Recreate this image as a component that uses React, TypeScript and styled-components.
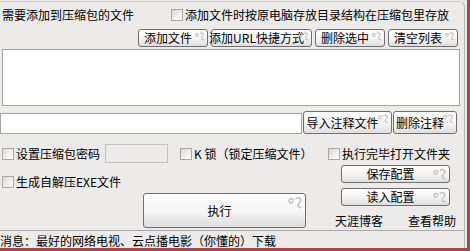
import React from "react";
import styled, { createGlobalStyle } from "styled-components";

const GlobalStyle = createGlobalStyle`
  html, body {
    margin: 0;
    padding: 0;
    background: #ecebea;
  }
  * {
    box-sizing: border-box;
  }
`;

const Window = styled.div`
  width: 470px;
  height: 251px;
  display: flex;
  flex-direction: column;
  background: #ecebea;
  border-right: 3px solid #b0413e;
  border-bottom: 3px solid #b0413e;
  font-family: "SimSun", "Noto Sans CJK SC", sans-serif;
  font-size: 12px;
  line-height: 14px;
  color: #000;
  overflow: hidden;
`;

const Panel = styled.div`
  width: 465px;
  margin-top: 1px;
  height: 229px;
  border-top: 1px solid #cfcfcf;
  border-right: 1px solid #b8b8b8;
  border-top-right-radius: 6px;
  display: flex;
  flex-direction: column;
`;

const TitleRow = styled.div`
  height: 26px;
  display: flex;
  align-items: center;
  padding-left: 2px;
`;

const Title = styled.span`
  white-space: nowrap;
`;

const ButtonRow = styled.div`
  margin-top: 1px;
  height: 18px;
  display: flex;
  gap: 3px;
  padding-left: 138px;
`;

const ListBox = styled.div`
  margin-top: 2px;
  margin-left: 2px;
  width: 458px;
  height: 57px;
  background: #fff;
  border: 1px solid #a5a5a5;
`;

const AnnotRow = styled.div`
  margin-top: 4px;
  height: 24px;
  display: flex;
  align-items: flex-end;
  gap: 1px;
`;

const TextInput = styled.div<{ $w: number; $h: number; $disabled?: boolean }>`
  width: ${(p) => p.$w}px;
  height: ${(p) => p.$h}px;
  flex: none;
  background: ${(p) => (p.$disabled ? "#ecebea" : "#fff")};
  border: 1px solid ${(p) => (p.$disabled ? "#c4c4c4" : "#a5a5a5")};
`;

const Btn = styled.div<{ $w: number; $h: number }>`
  position: relative;
  flex: none;
  width: ${(p) => p.$w}px;
  height: ${(p) => p.$h}px;
  display: flex;
  align-items: center;
  justify-content: center;
  padding-right: 10px;
  border: 1px solid #6f6f6f;
  border-radius: 3px;
  background: linear-gradient(#ffffff 0%, #f4f4f4 55%, #dedede 100%);
  white-space: nowrap;
`;

const SwirlWrap = styled.span<{ $s: number }>`
  position: absolute;
  right: 2px;
  top: 1px;
  width: ${(p) => p.$s}px;
  height: ${(p) => p.$s}px;
  display: flex;
`;

const Options = styled.div`
  flex: 1;
  display: flex;
`;

const LeftCol = styled.div`
  width: 328px;
  display: flex;
  flex-direction: column;
`;

const RightCol = styled.div`
  flex: 1;
  display: flex;
  flex-direction: column;
`;

const OptRow = styled.div<{ $mt: number; $h: number }>`
  margin-top: ${(p) => p.$mt}px;
  height: ${(p) => p.$h}px;
  display: flex;
  align-items: center;
`;

const Check = styled.span<{ $ml: number }>`
  flex: none;
  width: 12px;
  height: 12px;
  margin-left: ${(p) => p.$ml}px;
  margin-right: 2px;
  border: 1px solid #a8a8a8;
  background: linear-gradient(135deg, #d6d6d6 0%, #f2f2f2 60%, #ffffff 100%);
`;

const Label = styled.span`
  white-space: nowrap;
`;

const Gap = styled.span<{ $w: number }>`
  flex: none;
  width: ${(p) => p.$w}px;
`;

const BtnSlot = styled.div<{ $mt: number; $ml: number }>`
  margin-top: ${(p) => p.$mt}px;
  margin-left: ${(p) => p.$ml}px;
  display: flex;
`;

const Links = styled.div`
  margin-top: 8px;
  height: 14px;
  display: flex;
  gap: 25px;
  padding-left: 7px;
`;

const StatusBar = styled.div`
  flex: 1;
  width: 465px;
  border-top: 1px solid #a8a8a8;
  border-right: 1px solid #b8b8b8;
  display: flex;
  align-items: center;
  padding-top: 2px;
`;

const StatusText = styled.span`
  margin-left: 0;
  white-space: nowrap;
`;

function Swirl({ size }: { size: number }) {
  return (
    <SwirlWrap $s={size}>
      <svg width={size} height={size} viewBox="0 0 16 14" fill="none">
        <path
          d="M6.5 3.5 C4 1.5 1 3.5 2.5 6 C3.5 7.5 6 7 5.5 5"
          stroke="#c6c6c6"
          strokeWidth="1.6"
          strokeLinecap="round"
        />
        <path
          d="M9 2.5 C12.5 0.5 15.5 3.5 12.5 6.5 C10 8.5 10.5 12 14 11.5"
          stroke="#c6c6c6"
          strokeWidth="1.6"
          strokeLinecap="round"
        />
      </svg>
    </SwirlWrap>
  );
}

function Button({
  label,
  w,
  h,
  swirl = 11,
}: {
  label: string;
  w: number;
  h: number;
  swirl?: number;
}) {
  return (
    <Btn $w={w} $h={h}>
      {label}
      <Swirl size={swirl} />
    </Btn>
  );
}

export default function App() {
  return (
    <Window>
      <GlobalStyle />
      <Panel>
        <TitleRow>
          <Title>需要添加到压缩包的文件</Title>
          <Check $ml={37} />
          <Label>添加文件时按原电脑存放目录结构在压缩包里存放</Label>
        </TitleRow>
        <ButtonRow>
          <Button label="添加文件" w={70} h={18} />
          <Button label="添加URL快捷方式" w={101} h={18} />
          <Button label="删除选中" w={70} h={18} />
          <Button label="清空列表" w={70} h={18} />
        </ButtonRow>
        <ListBox />
        <AnnotRow>
          <TextInput $w={302} $h={21} />
          <Button label="导入注释文件" w={89} h={23} swirl={12} />
          <Button label="删除注释" w={64} h={23} swirl={12} />
        </AnnotRow>
        <Options>
          <LeftCol>
            <OptRow $mt={10} $h={19}>
              <Check $ml={2} />
              <Label>设置压缩包密码</Label>
              <Gap $w={5} />
              <TextInput $w={63} $h={19} $disabled />
              <Check $ml={12} />
              <Label>K 锁（锁定压缩文件）</Label>
            </OptRow>
            <OptRow $mt={12} $h={14}>
              <Check $ml={2} />
              <Label>生成自解压EXE文件</Label>
            </OptRow>
            <BtnSlot $mt={4} $ml={143}>
              <Button label="执行" w={163} h={35} swirl={16} />
            </BtnSlot>
          </LeftCol>
          <RightCol>
            <OptRow $mt={10} $h={19}>
              <Check $ml={0} />
              <Label>执行完毕打开文件夹</Label>
            </OptRow>
            <BtnSlot $mt={2} $ml={13}>
              <Button label="保存配置" w={109} h={18} swirl={15} />
            </BtnSlot>
            <BtnSlot $mt={5} $ml={13}>
              <Button label="读入配置" w={109} h={18} swirl={15} />
            </BtnSlot>
            <Links>
              <Label>天涯博客</Label>
              <Label>查看帮助</Label>
            </Links>
          </RightCol>
        </Options>
      </Panel>
      <StatusBar>
        <StatusText>消息：最好的网络电视、云点播电影（你懂的）下载</StatusText>
      </StatusBar>
    </Window>
  );
}
